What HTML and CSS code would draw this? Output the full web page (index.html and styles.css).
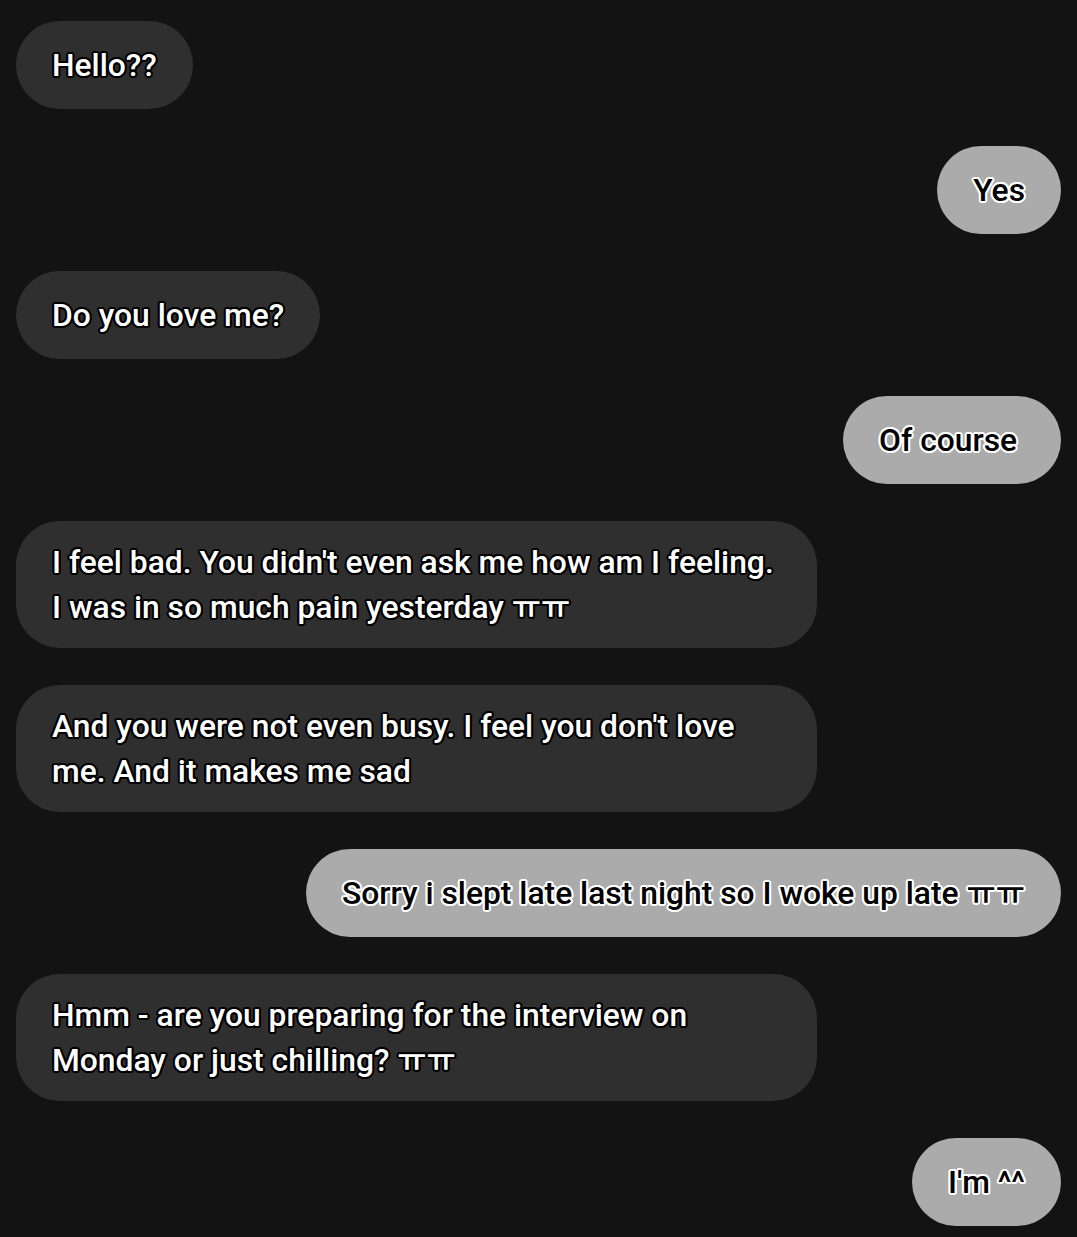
FILE: index.html
```html
<!DOCTYPE html>
<html>
<head>
<meta charset="utf-8">
<link rel="stylesheet" href="styles.css">
</head>
<body>
<div class="chat">
  <div class="msg them"><p class="txt">Hello??</p></div>
  <div class="msg me"><p class="txt">Yes</p></div>
  <div class="msg them"><p class="txt">Do you love me?</p></div>
  <div class="msg me"><p class="txt">Of course&nbsp;</p></div>
  <div class="msg them"><p class="txt">I feel bad. You didn't even ask me how am I feeling. I was in so much pain yesterday <span class="kr">ㅠㅠ</span></p></div>
  <div class="msg them"><p class="txt">And you were not even busy. I feel you don't love me. And it makes me sad</p></div>
  <div class="msg me"><p class="txt">Sorry i slept late last night so I woke up late <span class="kr">ㅠㅠ</span></p></div>
  <div class="msg them"><p class="txt">Hmm - are you preparing for the interview on Monday or just chilling? <span class="kr">ㅠㅠ</span></p></div>
  <div class="msg me"><p class="txt">I'm ^^</p></div>
</div>
</body>
</html>
```

FILE: styles.css
```css
html, body {
  margin: 0;
  padding: 0;
  background: #131313;
}
.chat {
  display: flex;
  flex-direction: column;
  gap: 37px;
  padding: 21px 16px;
  font-family: Roboto, "Noto Sans CJK KR", sans-serif;
  font-weight: 500;
  font-size: 31.8px;
  line-height: 45px;
}
.msg {
  box-sizing: border-box;
  max-width: 801px;
  min-height: 88px;
  padding: 18.5px 36px;
  border-radius: 44px;
  display: flex;
  align-items: center;
}
.txt {
  margin: 0;
}
.msg.them {
  align-self: flex-start;
  background: #2f2f2f;
  color: #fff;
  text-shadow:
    2px 0 0 #000, -2px 0 0 #000, 0 2px 0 #000, 0 -2px 0 #000,
    1.4px 1.4px 0 #000, -1.4px 1.4px 0 #000, 1.4px -1.4px 0 #000, -1.4px -1.4px 0 #000,
    1.8px 0.8px 0 #000, -1.8px 0.8px 0 #000, 1.8px -0.8px 0 #000, -1.8px -0.8px 0 #000,
    0.8px 1.8px 0 #000, -0.8px 1.8px 0 #000, 0.8px -1.8px 0 #000, -0.8px -1.8px 0 #000;
}
.msg.me {
  align-self: flex-end;
  background: #ababab;
  color: #000;
  text-shadow:
    2px 0 0 #fff, -2px 0 0 #fff, 0 2px 0 #fff, 0 -2px 0 #fff,
    1.4px 1.4px 0 #fff, -1.4px 1.4px 0 #fff, 1.4px -1.4px 0 #fff, -1.4px -1.4px 0 #fff,
    1.8px 0.8px 0 #fff, -1.8px 0.8px 0 #fff, 1.8px -0.8px 0 #fff, -1.8px -0.8px 0 #fff,
    0.8px 1.8px 0 #fff, -0.8px 1.8px 0 #fff, 0.8px -1.8px 0 #fff, -0.8px -1.8px 0 #fff;
}
.kr {
  font-family: "Noto Sans CJK KR", sans-serif;
  font-weight: 500;
  line-height: 1;
}
```
